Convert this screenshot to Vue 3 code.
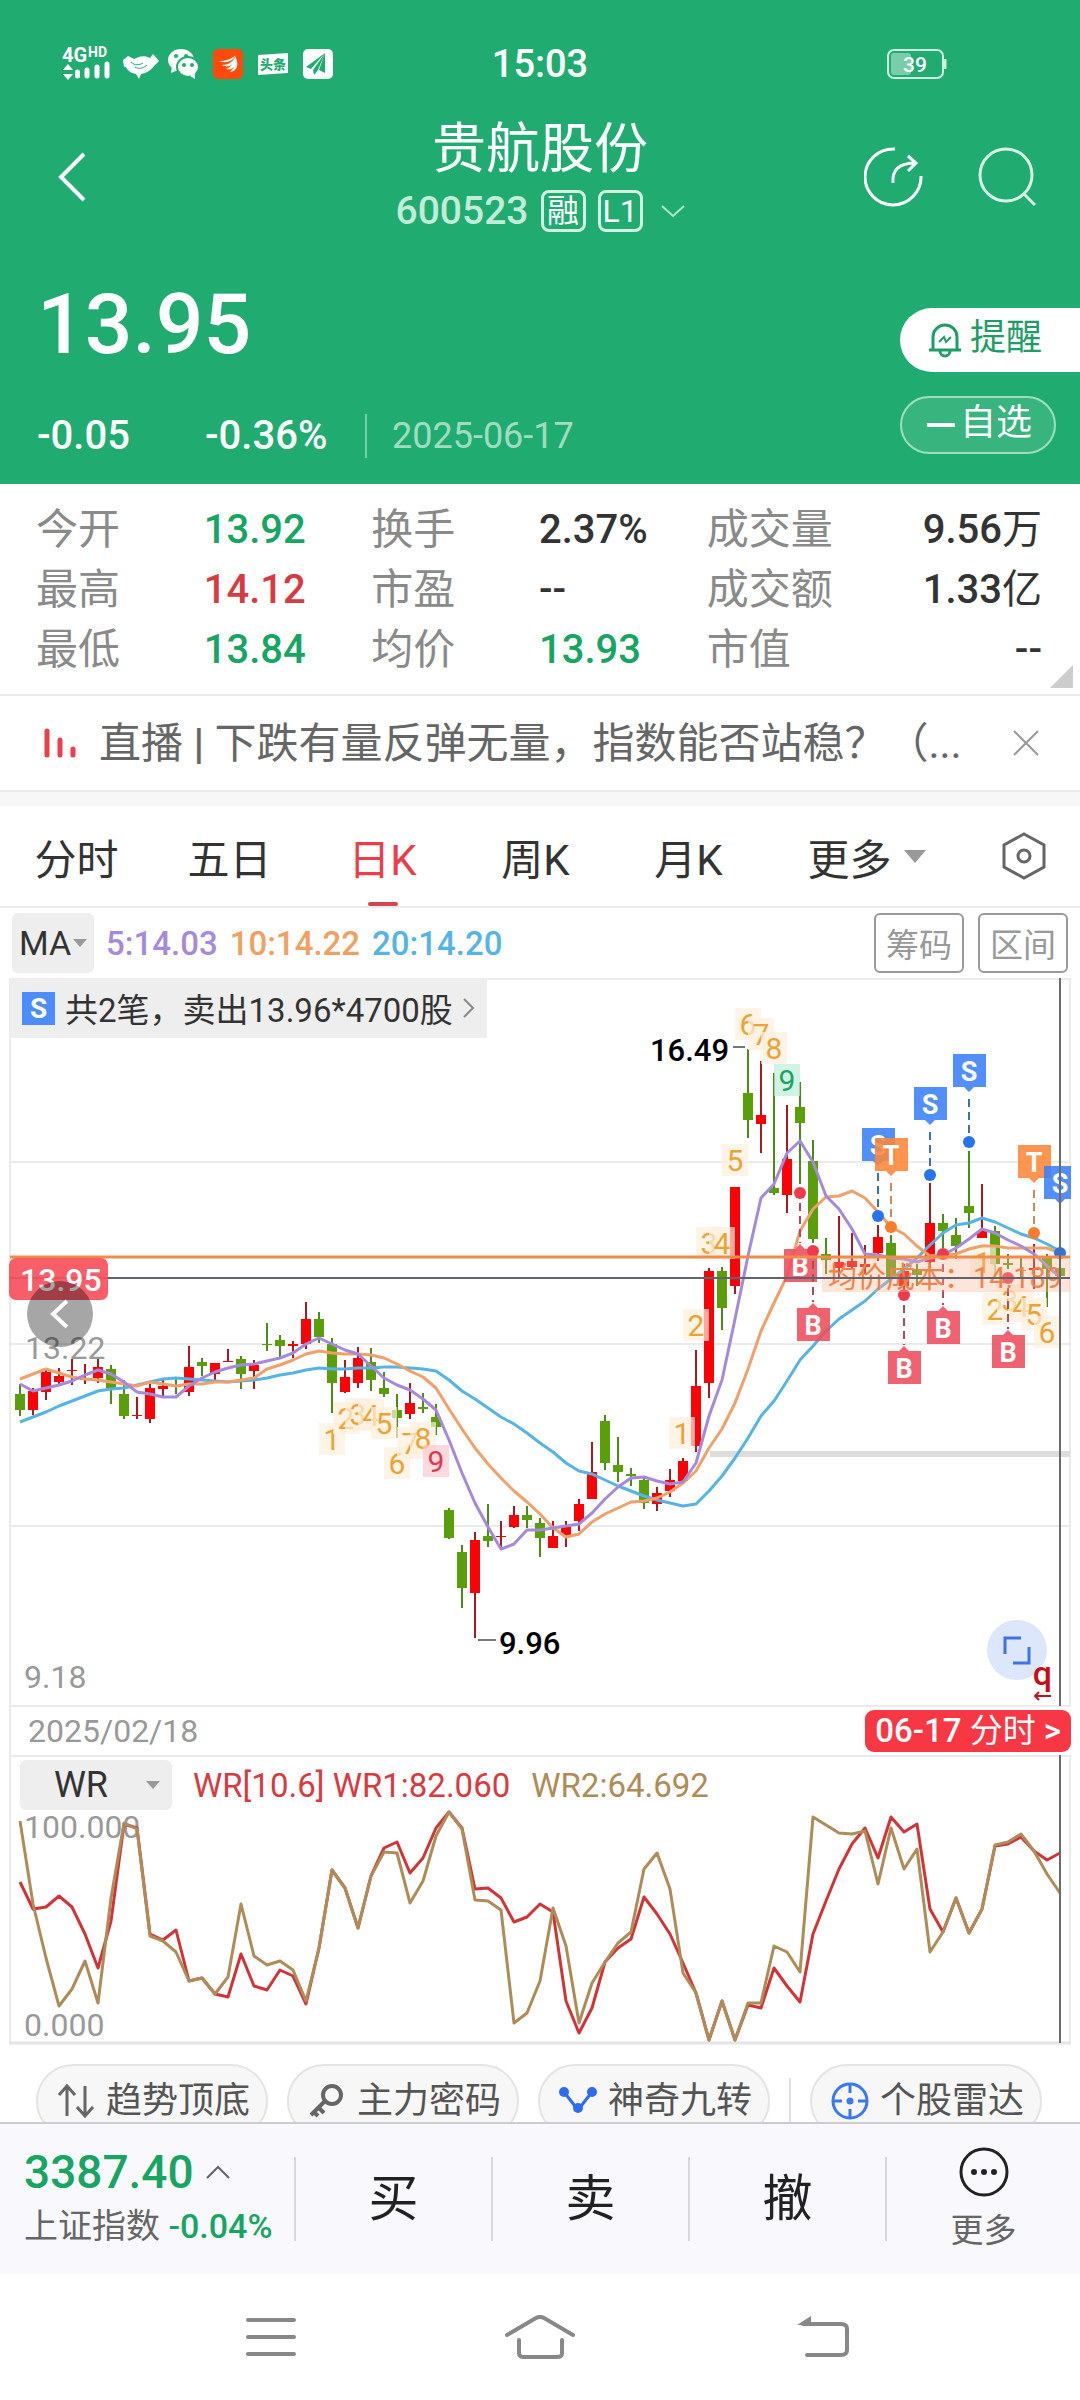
<!--
  App.vue
  个股行情页：报价头部、日K图、WR指标、底部交易栏
-->
<template>
  <div class="page">
    <header class="header">
      <div class="status">
        <div class="status-left">
          <svg class="status-icons" viewBox="55 35 290 55" aria-hidden="true">
            <text class="net" x="62" y="60">4G</text>
            <text class="net-hd" x="88" y="55">HD</text>
            <path d="M63 68l5-6 5 6zM63 72l5 6 5-6z" fill="#fff" />
            <path d="M77.500 70v4M87 68v6M97 65v9M107 62v12" stroke="#fff" stroke-width="5" stroke-linecap="round" />
            <path d="M123 58l5-4 6 3c5-3 11-4 16-1l3-4 6 7-5 5c-3 4-7 7-13 8l-2 5-3-5c-5-1-8-3-10-7h-2z" fill="#fff" />
            <path d="M131 60c4 4 8 3 12 1M135 65c3 2 8 2 12-2" fill="none" stroke="#20ac70" stroke-width="1" />
            <ellipse cx="181" cy="58" rx="13" ry="11" fill="#fff" />
            <path d="M172 64l-1 7 7-3z" fill="#fff" />
            <ellipse cx="188" cy="65" rx="11" ry="10" fill="#fff" stroke="#20ac70" stroke-width="2" />
            <path d="M190 74l5 3v-6z" fill="#fff" />
            <circle cx="176" cy="54" r="2" fill="#20ac70" />
            <circle cx="186" cy="54" r="2" fill="#20ac70" />
            <circle cx="184" cy="63" r="2" fill="#20ac70" />
            <circle cx="192" cy="63" r="2" fill="#20ac70" />
            <rect x="213" y="47" width="30" height="30" rx="5" fill="#ff4a0a" />
            <path d="M219 59c7 0 12-2 17-6-3 6-9 9-17 6zM222 63c6 0 11-3 14-9-1 8-7 13-14 9zM226 67c5-2 8-6 10-12 1 8-3 14-10 12zM230 70c4-4 6-8 6-14 3 7 1 13-6 14z" fill="#fff" />
            <path d="M258 53l30-2v20l-30 2z" fill="#fff" />
            <text class="toutiao" x="260" y="67">头条</text>
            <rect x="303" y="47" width="30" height="30" rx="5" fill="#fff" />
            <path d="M325 51l-19 14 5 2zM325 51l-12 17 1 5 4-5zM325 51l-6 17 6 3z" fill="#20ac70" />
          </svg>
        </div>
        <span class="clock">15:03</span>
        <div class="status-right">
          <svg class="battery" viewBox="0 0 60 30">
            <rect x="1" y="1" width="55" height="28" rx="6" fill="none" stroke="#d3f1e2" stroke-width="2" />
            <rect x="4" y="4" width="20" height="22" rx="3" fill="#79cea9" />
            <path d="M58 10v10" stroke="#d3f1e2" stroke-width="3" />
            <text x="28" y="23" text-anchor="middle">39</text>
          </svg>
        </div>
      </div>

      <div class="titlebar">
        <button class="icon-btn back" aria-label="返回">
          <svg width="28" height="50" viewBox="0 0 28 50"><path d="M26 2L3 25l23 23" fill="none" stroke="#fff" stroke-width="4" /></svg>
        </button>
        <div class="title-box">
          <h1 class="title">贵航股份</h1>
          <div class="subtitle">
            <span class="code">600523</span>
            <span class="tag">融</span>
            <span class="tag">L1</span>
            <svg class="down" width="24" height="14" viewBox="0 0 24 14"><path d="M1 2l11 10L23 2" fill="none" stroke="#b5e3cd" stroke-width="2" /></svg>
          </div>
        </div>
        <div class="title-actions">
          <button class="icon-btn" aria-label="分享">
            <svg width="60" height="60" viewBox="0 0 60 60" fill="none" stroke="#fff" stroke-width="3">
              <path d="M31 2a28 28 0 1 0 26 27" />
              <path d="M29 36c-1-13 6-20 22-20M44 9l8 7-8 8" />
            </svg>
          </button>
          <button class="icon-btn" aria-label="搜索">
            <svg width="60" height="60" viewBox="0 0 60 60" fill="none" stroke="#d8f3e6" stroke-width="3">
              <circle cx="30" cy="28" r="26" />
              <path d="M48 47l11 11" />
            </svg>
          </button>
        </div>
      </div>

      <div class="quote">
        <div>
          <div class="price">13.95</div>
          <div class="change">
            <span class="diff">-0.05</span>
            <span class="rate">-0.36%</span>
            <span class="date">2025-06-17</span>
          </div>
        </div>
        <div class="quote-actions">
          <button class="remind">
            <svg width="34" height="36" viewBox="0 0 34 36" fill="none" stroke="#1f9d67" stroke-width="3">
              <path d="M5 28V15a12 12 0 0 1 24 0v13M1 28h32M12 29a5 5 0 0 0 10 0" />
              <path d="M11 20l5-5 2 5 5-5" stroke-width="2" />
            </svg>
            <span>提醒</span>
          </button>
          <button class="favor"><i class="minus"></i><span>自选</span></button>
        </div>
      </div>
    </header>

    <dl class="stats">
      <div v-for="s in stats" :key="s.label" class="stat">
        <dt>{{ s.label }}</dt>
        <dd :class="s.color">{{ s.value }}<span v-if="s.unit" class="unit">{{ s.unit }}</span></dd>
      </div>
      <i class="corner"></i>
    </dl>

    <div class="news">
      <svg width="34" height="30" viewBox="0 0 34 30"><path d="M4 3v24M17 12v15M30 21v6" stroke="#ec3f4d" stroke-width="5" stroke-linecap="round" /></svg>
      <a href="#" class="news-text">直播 <b>|</b> 下跌有量反弹无量，指数能否站稳？（...</a>
      <button class="icon-btn" aria-label="关闭">
        <svg width="26" height="26" viewBox="0 0 26 26"><path d="M1 1l24 24M25 1L1 25" stroke="#999" stroke-width="2" /></svg>
      </button>
    </div>

    <nav class="tabs">
      <button v-for="t in tabs" :key="t" class="tab" :class="{ active: t === current }" @click="current = t">{{ t }}</button>
      <button class="tab tab-more">更多<i class="tri"></i></button>
      <button class="tab tab-set" aria-label="设置">
        <svg width="44" height="48" viewBox="0 0 44 48" fill="none" stroke="#666" stroke-width="3">
          <path d="M22 2l20 11v22L22 46 2 35V13z" />
          <circle cx="22" cy="24" r="6" />
        </svg>
      </button>
    </nav>

    <div class="ma-bar">
      <button class="ma-btn">MA<i class="tri small"></i></button>
      <span class="purple">5:14.03</span>
      <span class="orange">10:14.22</span>
      <span class="blue">20:14.20</span>
      <div class="ma-actions">
        <button class="outline-btn">筹码</button>
        <button class="outline-btn">区间</button>
      </div>
    </div>

    <section class="chart">
      <svg class="chart-svg" viewBox="0 0 1080 729">
        <path d="M10 1H1070M10 184H1070M10 366H1070M10 548H1070M10 728H1070M10 0V729M1070 0V729" class="grid" />
        <rect x="710" y="473" width="360" height="6" fill="#ddd" />

        <!-- K线 -->
        <g v-for="(k, i) in candles" :key="i">
          <rect :x="px(i) - 1" :y="k[0]" width="2" :height="k[3] - k[0]" :fill="k[4] ? '#a81a22' : '#4d8a17'" />
          <rect :x="px(i) - 5" :y="k[1]" width="10" :height="k[2] - k[1]" :fill="k[4] ? '#fb0207' : '#5a9f0b'" />
        </g>

        <!-- 九转数字 -->
        <g v-for="(n, i) in nines" :key="'n' + i" :class="['nine', n[3]]">
          <rect :x="n[1] - 13" :y="n[2] - 16" width="26" height="32" />
          <text :x="n[1]" :y="n[2] + 11" text-anchor="middle">{{ n[0] }}</text>
        </g>

        <!-- 均线 -->
        <polyline :points="line(ma20)" class="ma" stroke="#56b4e4" />
        <polyline :points="line(ma10)" class="ma" stroke="#f0a06a" />
        <polyline :points="line(ma5)" class="ma" stroke="#a58adb" />

        <!-- 买卖点 -->
        <g v-for="(m, i) in marks" :key="'m' + i" :class="['mark', 'mark-' + m.t]">
          <path :d="stem(m)" class="stem" />
          <circle :cx="m.x" :cy="m.dot" r="6" />
          <path :d="flag(m)" class="flag" />
          <text :x="m.x" :y="m.y + 27" text-anchor="middle">{{ m.t }}</text>
        </g>

        <rect x="822" y="280" width="248" height="34" fill="#fbb593" opacity="0.35" />
        <text x="828" y="310" class="cost">均价成本：14.189</text>
        <path d="M10 279H1070" stroke="#f28b48" stroke-width="3" />
        <path d="M10 300H1070" stroke="#5f6470" stroke-width="2" />
        <path d="M1060 0V728" stroke="#6b6b6b" stroke-width="2" />

        <path d="M733 69H745M478 662H496" stroke="#777" stroke-width="2" />
        <text x="729" y="83" text-anchor="end" class="extreme">16.49</text>
        <text x="499" y="676" class="extreme">9.96</text>
        <text x="25" y="381" class="axis">13.22</text>
        <text x="24" y="710" class="axis">9.18</text>
        <rect x="9" y="280" width="99" height="42" rx="7" fill="#f7505c" opacity="0.92" />
        <text x="20" y="313" class="last">13.95</text>
      </svg>
      <button class="trade">
        <b class="trade-tag">S</b>共2笔，卖出13.96*4700股
        <svg width="12" height="20" viewBox="0 0 12 20"><path d="M1 1l9 9-9 9" fill="none" stroke="#888" stroke-width="2" /></svg>
      </button>
      <button class="round collapse" aria-label="收起">
        <svg width="66" height="66" viewBox="0 0 66 66"><path d="M40 20L26 33l14 13" fill="none" stroke="#fff" stroke-width="4" /></svg>
      </button>
      <button class="round expand" aria-label="全屏">
        <svg width="60" height="60" viewBox="0 0 60 60"><path d="M18 34V18h16M26 43h16V27" fill="none" stroke="#3e74e0" stroke-width="3" /></svg>
      </button>
      <span class="q">q<svg width="18" height="10" viewBox="0 0 18 10"><path d="M18 5H2M6 1L2 5l4 4" fill="none" stroke="#c5101c" stroke-width="2" /></svg></span>
    </section>

    <div class="date-row">
      <span>2025/02/18</span>
      <button class="day-btn">06-17 <span class="unit">分时</span> &gt;</button>
    </div>

    <section class="wr">
      <svg class="chart-svg" viewBox="0 0 1080 290">
        <path d="M10 1H1070M10 0V290M1070 0V290" class="grid" />
        <path d="M10 288H1070" stroke="#e4e4e4" stroke-width="3" />
        <text x="24" y="83" class="axis">100.000</text>
        <text x="24" y="281" class="axis">0.000</text>
        <polyline :points="line(wr1)" class="ma" stroke="#d03437" />
        <polyline :points="line(wr2)" class="ma" stroke="#ae8c58" />
        <path d="M1060 0V288" stroke="#6b6b6b" stroke-width="2" />
      </svg>
      <div class="wr-head">
        <button class="wr-btn">WR<i class="tri small"></i></button>
        <span class="red">WR[10.6] WR1:82.060</span>
        <span class="tan">WR2:64.692</span>
      </div>
    </section>

    <div class="tools">
      <button class="tool">
        <svg width="38" height="36" viewBox="0 0 38 36" fill="none" stroke="#666" stroke-width="3"><path d="M10 33V4M2 12l8-9 8 9M28 3v29M20 24l8 9 8-9" /></svg>
        趋势顶底
      </button>
      <button class="tool">
        <svg width="38" height="36" viewBox="0 0 38 36" fill="none" stroke="#666" stroke-width="4"><circle cx="24" cy="12" r="9" /><path d="M17 18L3 32M11 25l5 5M6 29l4 4" /></svg>
        主力密码
      </button>
      <button class="tool">
        <svg width="38" height="36" viewBox="0 0 38 36"><path d="M5 9l14 18L33 9" fill="none" stroke="#2f6bf0" stroke-width="3" /><g fill="#2f6bf0"><circle cx="5" cy="9" r="5" /><circle cx="33" cy="9" r="5" /><circle cx="19" cy="25" r="5" /></g></svg>
        神奇九转
      </button>
      <i class="tool-line"></i>
      <button class="tool">
        <svg width="38" height="38" viewBox="0 0 38 38" fill="none" stroke="#3a78f2" stroke-width="3"><circle cx="19" cy="19" r="17" /><path d="M19 2v9M19 27v9M2 19h9M27 19h9" /><circle cx="19" cy="19" r="2" fill="#3a78f2" /></svg>
        个股雷达
      </button>
    </div>

    <footer class="bottom">
      <div class="index">
        <div class="index-value">3387.40
          <svg width="24" height="16" viewBox="0 0 24 16"><path d="M1 14L12 3l11 11" fill="none" stroke="#666" stroke-width="2" /></svg>
        </div>
        <div class="index-name">上证指数 <span>-0.04%</span></div>
      </div>
      <button class="trade-btn">买</button>
      <button class="trade-btn">卖</button>
      <button class="trade-btn">撤</button>
      <button class="trade-btn more-btn">
        <svg width="50" height="50" viewBox="0 0 50 50"><circle cx="25" cy="25" r="23" fill="none" stroke="#222" stroke-width="3" /><g fill="#222"><circle cx="15" cy="25" r="3" /><circle cx="25" cy="25" r="3" /><circle cx="35" cy="25" r="3" /></g></svg>
        更多
      </button>
    </footer>

    <nav class="sys-nav">
      <button class="icon-btn" aria-label="任务">
        <svg width="50" height="42" viewBox="0 0 50 42"><path d="M2 4h46M2 21h46M2 38h46" stroke="#888" stroke-width="4" stroke-linecap="round" /></svg>
      </button>
      <button class="icon-btn" aria-label="主页">
        <svg width="70" height="44" viewBox="0 0 70 44" fill="none" stroke="#888" stroke-width="4" stroke-linecap="round"><path d="M2 20L31 3q4-2 8 0l29 17M14 25v13q0 4 5 4h33q5 0 5-4V25" /></svg>
      </button>
      <button class="icon-btn" aria-label="后退">
        <svg width="52" height="42" viewBox="0 0 52 42"><path d="M6 8h38q6 0 6 5v21q0 5-6 5H10" fill="none" stroke="#888" stroke-width="4" stroke-linecap="round" /><path d="M0 9L14 0v9z" fill="#888" /></svg>
      </button>
    </nav>
  </div>
</template>

<script setup>
import { ref } from 'vue';

const tabs = ['分时', '五日', '日K', '周K', '月K'];
const current = ref('日K');

const stats = [
  { label: '今开', value: '13.92', color: 'green' },
  { label: '换手', value: '2.37%' },
  { label: '成交量', value: '9.56', unit: '万' },
  { label: '最高', value: '14.12', color: 'red' },
  { label: '市盈', value: '--' },
  { label: '成交额', value: '1.33', unit: '亿' },
  { label: '最低', value: '13.84', color: 'green' },
  { label: '均价', value: '13.93', color: 'green' },
  { label: '市值', value: '--' }
];

// [最高, 实体上沿, 实体下沿, 最低, 是否上涨]
const candles = [
  [406, 416, 432, 438, 0], [410, 413, 432, 437, 1], [390, 394, 414, 422, 1], [390, 398, 404, 406, 1],
  [381, 392, 393, 407, 1], [386, 401, 402, 406, 1], [381, 389, 400, 405, 1], [387, 391, 410, 426, 0],
  [402, 416, 438, 441, 0], [419, 437, 438, 441, 1], [406, 410, 441, 445, 1], [402, 408, 411, 420, 1],
  [400, 408, 409, 416, 0], [368, 389, 414, 418, 1], [380, 384, 388, 398, 0], [385, 385, 396, 403, 1],
  [371, 383, 384, 384, 1], [378, 381, 396, 411, 0], [382, 387, 393, 411, 1], [345, 366, 367, 373, 0],
  [357, 362, 368, 379, 0], [363, 366, 368, 380, 1], [324, 341, 366, 371, 1], [334, 341, 359, 365, 0],
  [360, 366, 405, 435, 0], [382, 399, 414, 415, 1], [369, 380, 405, 410, 1], [370, 384, 402, 413, 0],
  [394, 410, 416, 419, 0], [416, 432, 440, 460, 0], [405, 425, 436, 441, 1], [415, 429, 431, 435, 0],
  [426, 439, 449, 457, 0], [530, 532, 560, 561, 0], [567, 574, 610, 630, 0], [554, 562, 615, 660, 1],
  [526, 558, 563, 569, 0], [543, 558, 559, 570, 1], [528, 537, 549, 550, 1], [528, 537, 542, 550, 0],
  [540, 545, 560, 579, 0], [543, 558, 570, 570, 1], [543, 549, 557, 569, 1], [521, 526, 543, 553, 1],
  [464, 494, 521, 521, 1], [437, 443, 485, 492, 0], [459, 487, 494, 504, 0], [490, 496, 498, 508, 0],
  [500, 502, 525, 531, 0], [509, 515, 526, 533, 1], [491, 502, 513, 519, 1], [480, 483, 503, 505, 1],
  [372, 408, 468, 474, 1], [290, 293, 405, 420, 1], [289, 293, 330, 352, 0], [209, 209, 308, 316, 1],
  [71, 115, 142, 160, 0], [83, 137, 146, 175, 1], [95, 210, 215, 217, 0], [127, 181, 217, 235, 1],
  [104, 129, 145, 206, 0], [162, 183, 261, 265, 0], [260, 276, 282, 296, 0], [238, 284, 290, 301, 1],
  [255, 283, 289, 292, 1], [267, 286, 289, 296, 1], [247, 259, 275, 283, 1], [257, 265, 300, 300, 0],
  [286, 293, 308, 312, 1], [286, 291, 297, 308, 0], [205, 245, 284, 290, 1], [236, 245, 253, 270, 0],
  [240, 257, 268, 281, 0], [173, 228, 235, 250, 0], [206, 253, 260, 260, 1], [248, 253, 286, 300, 0],
  [276, 285, 287, 291, 0], [280, 292, 293, 301, 0], [266, 290, 292, 311, 1], [276, 280, 291, 329, 0],
  [285, 290, 298, 320, 0]
];

const ma5 = [
  406, 413, 410, 407, 403, 397, 392, 396, 404, 414, 416, 419, 419, 408, 400, 394, 390, 387, 386, 383,
  380, 375, 366, 360, 366, 372, 376, 388, 400, 407, 412, 421, 432, 462, 495, 525, 549, 571, 566, 552,
  552, 550, 548, 546, 535, 521, 509, 500, 499, 503, 506, 504, 485, 438, 402, 341, 278, 220, 206, 175,
  163, 184, 218, 231, 251, 276, 277, 280, 281, 284, 280, 277, 270, 261, 251, 255, 262, 268, 276, 288, 299
];
const ma10 = [
  401, 396, 391, 395, 399, 401, 402, 404, 406, 408, 404, 406, 408, 406, 406, 404, 404, 402, 400, 391,
  387, 382, 376, 373, 375, 376, 376, 377, 380, 386, 393, 399, 410, 431, 451, 470, 486, 500, 513, 524,
  536, 550, 559, 556, 544, 536, 530, 524, 523, 520, 514, 505, 493, 470, 451, 425, 391, 353, 325, 298,
  253, 231, 219, 218, 213, 220, 234, 249, 256, 268, 278, 277, 276, 271, 268, 268, 270, 270, 270, 270, 275
];
const ma20 = [
  444, 439, 434, 428, 423, 418, 413, 411, 410, 407, 404, 401, 400, 401, 402, 403, 404, 403, 402, 400,
  397, 395, 392, 390, 391, 391, 390, 390, 389, 389, 390, 391, 393, 402, 413, 421, 430, 439, 446, 455,
  465, 474, 485, 493, 496, 502, 508, 513, 518, 522, 525, 528, 526, 513, 498, 480, 460, 438, 423, 403,
  382, 368, 353, 341, 332, 323, 311, 301, 291, 280, 267, 255, 247, 245, 240, 244, 250, 256, 260, 266, 273
];
const wr1 = [
  127, 154, 152, 141, 152, 179, 213, 166, 69, 73, 179, 185, 175, 226, 223, 239, 242, 199, 231, 235,
  215, 221, 249, 193, 115, 133, 173, 121, 93, 87, 118, 103, 73, 57, 73, 134, 133, 143, 167, 162,
  149, 157, 246, 278, 253, 207, 193, 184, 142, 159, 179, 208, 238, 285, 246, 285, 250, 253, 213, 231,
  247, 179, 146, 114, 89, 73, 103, 62, 77, 69, 154, 177, 143, 178, 154, 91, 89, 82, 96, 105, 98
];
const wr2 = [
  66, 149, 203, 251, 234, 206, 248, 143, 68, 74, 181, 186, 197, 226, 223, 239, 222, 149, 201, 210,
  206, 215, 246, 193, 115, 133, 173, 121, 97, 98, 148, 126, 81, 57, 74, 145, 146, 155, 268, 258,
  226, 153, 191, 268, 228, 207, 188, 177, 114, 98, 134, 218, 238, 285, 246, 285, 248, 248, 191, 197,
  217, 62, 70, 78, 79, 76, 129, 73, 114, 94, 197, 177, 143, 178, 154, 90, 87, 79, 96, 119, 138
];

// [数字, x, y, 样式]
const nines = [
  [1, 332, 461], [2, 346, 440], [3, 358, 436], [4, 371, 437], [5, 384, 445],
  [6, 397, 485], [7, 410, 465], [8, 423, 460], [9, 436, 483, 'nine-red'],
  [1, 682, 455], [2, 696, 347], [3, 709, 265], [4, 722, 265], [5, 735, 182],
  [6, 748, 46], [7, 761, 56], [8, 774, 70], [9, 787, 102, 'nine-green'],
  [1, 983, 284], [2, 995, 331], [3, 1010, 322], [4, 1021, 328], [5, 1034, 336], [6, 1047, 354]
];

const marks = [
  { t: 'S', x: 878, y: 150, dot: 238 },
  { t: 'T', x: 891, y: 160, dot: 249 },
  { t: 'S', x: 930, y: 109, dot: 197 },
  { t: 'S', x: 969, y: 76, dot: 164 },
  { t: 'T', x: 1034, y: 167, dot: 255 },
  { t: 'S', x: 1060, y: 188, dot: 275 },
  { t: 'B', x: 800, y: 271, dot: 215 },
  { t: 'B', x: 813, y: 330, dot: 273 },
  { t: 'B', x: 904, y: 373, dot: 317 },
  { t: 'B', x: 943, y: 333, dot: 276 },
  { t: 'B', x: 1008, y: 357, dot: 300 }
];

function px(i) {
  return 20 + i * 13;
}
function line(values) {
  return values.map((v, i) => `${px(i)},${v}`).join(' ');
}
// 买入旗标尖角朝上，其余朝下
function flag({ t, x, y }) {
  const right = Math.min(x + 17, 1071);
  return t === 'B'
    ? `M${x - 16} ${y}H${x - 5}L${x} ${y - 5}L${x + 5} ${y}H${right}V${y + 33}H${x - 16}z`
    : `M${x - 16} ${y}H${right}V${y + 33}H${x + 5}L${x} ${y + 38}L${x - 5} ${y + 33}H${x - 16}z`;
}
function stem({ t, x, y, dot }) {
  return t === 'B' ? `M${x} ${dot + 10}V${y - 6}` : `M${x} ${y + 45}V${dot - 6}`;
}
</script>

<style>
body {
  margin: 0;
  background: #fff;
}
</style>

<style scoped>
.page {
  font-family: Roboto, "Noto Sans CJK SC", sans-serif;
  color: #333;
  background: #fff;
}
button {
  margin: 0;
  padding: 0;
  border: 0;
  background: none;
  font: inherit;
  color: inherit;
  cursor: pointer;
}
svg {
  display: block;
  flex: none;
}
.green { color: #16a562; }
.red { color: #d73a40; }
.purple { color: #a58adb; }
.orange { color: #f0a060; }
.blue { color: #56b4e4; }
.tan { color: #ae8c58; }
.unit { font-weight: 400; }

/* 头部 */
.header {
  background: #20ac70;
  color: #fff;
}
.status {
  display: grid;
  grid-template-columns: 1fr auto 1fr;
  align-items: center;
  height: 112px;
  padding: 8px 55px 0;
}
.status-icons {
  width: 290px;
  height: 55px;
}
.net {
  font-size: 20px;
  font-weight: 700;
  fill: #fff;
}
.net-hd {
  font-size: 14px;
  font-weight: 700;
  fill: #fff;
}
.toutiao {
  font-size: 13px;
  font-weight: 900;
  fill: #20ac70;
}
.clock {
  font-size: 38px;
  font-weight: 500;
}
.status-right {
  display: flex;
  justify-content: flex-end;
  padding-right: 78px;
}
.battery {
  width: 60px;
  height: 30px;
}
.battery text {
  font-size: 21px;
  font-weight: 500;
  fill: #fff;
}
.titlebar {
  display: grid;
  grid-template-columns: 1fr auto 1fr;
  align-items: center;
  padding: 0 44px;
}
.icon-btn {
  display: flex;
  justify-self: start;
}
.back {
  margin-left: 14px;
}
.title-box {
  text-align: center;
}
.title {
  margin: 0;
  font-size: 54px;
  font-weight: 400;
  line-height: 60px;
}
.subtitle {
  display: flex;
  align-items: center;
  justify-content: center;
  gap: 12px;
  margin-top: 8px;
  line-height: 46px;
}
.code {
  font-size: 39px;
  font-weight: 500;
  color: #c2ebd8;
}
.tag {
  width: 39px;
  border: 3px solid #d3f1e2;
  border-radius: 8px;
  font-size: 32px;
  line-height: 36px;
}
.down {
  margin-left: 6px;
}
.title-actions {
  display: flex;
  justify-content: flex-end;
  gap: 52px;
}
.quote {
  display: flex;
  justify-content: space-between;
  padding: 50px 0 26px 37px;
}
.price {
  font-size: 84px;
  font-weight: 500;
  line-height: 82px;
}
.change {
  display: flex;
  align-items: center;
  margin-top: 48px;
  font-size: 40px;
  font-weight: 500;
  line-height: 44px;
}
.diff {
  width: 168px;
}
.rate {
  width: 160px;
  border-right: 2px solid #79cea9;
}
.date {
  padding-left: 25px;
  font-size: 36px;
  font-weight: 400;
  color: #a0dcc0;
}
.quote-actions {
  display: flex;
  flex-direction: column;
  gap: 24px;
  padding-top: 24px;
}
.remind {
  display: flex;
  align-items: center;
  gap: 8px;
  height: 64px;
  padding: 0 38px 0 28px;
  border-radius: 32px 0 0 32px;
  background: #fff;
  font-size: 36px;
  color: #1f9d67;
}
.remind span,
.favor span {
  line-height: 44px;
  padding-bottom: 4px;
}
.favor {
  display: flex;
  align-items: center;
  gap: 5px;
  height: 58px;
  margin-right: 24px;
  padding: 0 22px 0 25px;
  border: 2px solid #a0dcc0;
  border-radius: 29px;
  background: #38b57f;
  font-size: 36px;
}
.minus {
  width: 28px;
  height: 4px;
  background: #fff;
}

/* 行情数据 */
.stats {
  position: relative;
  display: grid;
  grid-template-columns: 1fr 1fr 1fr;
  margin: 0;
  padding: 16px 38px 14px 36px;
  border-bottom: 2px solid #ebebeb;
  font-size: 40px;
  line-height: 60px;
}
.stat {
  display: grid;
  grid-template-columns: 1fr 1fr;
}
.stat:nth-child(3n) {
  display: flex;
  justify-content: space-between;
}
.stat dt {
  font-size: 42px;
  color: #8a8a8a;
}
.stat dd {
  margin: 0;
  font-weight: 500;
}
.corner {
  position: absolute;
  right: 7px;
  bottom: 6px;
  border-left: 23px solid transparent;
  border-bottom: 23px solid #ccc;
}

/* 直播条 */
.news {
  display: flex;
  align-items: center;
  height: 94px;
  padding: 0 41px 0 43px;
  border-bottom: 2px solid #ebebeb;
}
.news-text {
  flex: 1;
  margin: 0 22px;
  padding-bottom: 8px;
  font-size: 42px;
  color: #666;
  text-decoration: none;
  white-space: nowrap;
}

/* 周期 */
.tabs {
  display: grid;
  grid-template-columns: repeat(5, 153fr) 203fr 112fr;
  height: 100px;
  border-top: 14px solid #f7f7f7;
  border-bottom: 2px solid #ebebeb;
}
.tab {
  position: relative;
  display: flex;
  align-items: center;
  justify-content: center;
  font-size: 42px;
}
.tab.active {
  color: #e93f4c;
}
.tab.active::after {
  content: '';
  position: absolute;
  bottom: 0;
  width: 30px;
  height: 4px;
  border-radius: 2px;
  background: #d0484f;
}
.tri {
  margin-left: 12px;
  border: 11px solid transparent;
  border-top: 13px solid #999;
  border-bottom: 0;
}
.tri.small {
  margin-left: 2px;
  border-width: 8px 7px 0;
}

/* 均线 */
.ma-bar {
  display: flex;
  align-items: center;
  gap: 12px;
  padding: 5px 12px;
  font-size: 33px;
  font-weight: 500;
}
.ma-btn {
  display: flex;
  align-items: center;
  justify-content: center;
  width: 82px;
  height: 60px;
  border-radius: 6px;
  background: #eee;
  font-size: 34px;
  font-weight: 400;
}
.ma-actions {
  display: flex;
  gap: 14px;
  margin-left: auto;
}
.outline-btn {
  height: 60px;
  padding: 0 10px;
  border: 2px solid #999;
  border-radius: 6px;
  font-size: 33px;
  font-weight: 400;
  color: #999;
}

/* K线图 */
.chart {
  position: relative;
}
.chart-svg {
  width: 100%;
  height: auto;
}
.grid {
  fill: none;
  stroke: #ebebeb;
  stroke-width: 2;
}
.ma {
  fill: none;
  stroke-width: 3;
  stroke-linejoin: round;
}
.axis {
  font-size: 32px;
  fill: #999;
}
.extreme {
  font-size: 31px;
  font-weight: 500;
  fill: #000;
}
.last {
  font-size: 32px;
  font-weight: 500;
  fill: #fff;
}
.cost {
  font-size: 29px;
  fill: #f0834a;
}
.nine rect {
  fill: #fff0dc;
  opacity: 0.7;
}
.nine text {
  font-size: 30px;
  fill: #eba336;
}
.nine-red rect {
  fill: #fbc9d0;
}
.nine-red text {
  fill: #dc3a50;
}
.nine-green rect {
  fill: #bdecd8;
}
.nine-green text {
  fill: #16a562;
}
.stem {
  fill: none;
  stroke-width: 2;
  stroke-dasharray: 8 5;
}
.flag {
  opacity: 0.88;
}
.mark text {
  font-size: 27px;
  font-weight: 700;
  fill: #fff;
}
.mark-S { fill: #2674ee; }
.mark-S .flag { fill: #3a80fa; }
.mark-S .stem { stroke: #3d71a8; }
.mark-T { fill: #fb7c2a; }
.mark-T .flag { fill: #fd8638; }
.mark-T .stem { stroke: #d08a5a; }
.mark-B { fill: #f03a4c; }
.mark-B .flag { fill: #ef4c5c; }
.mark-B .stem { stroke: #b5475a; }
.trade {
  position: absolute;
  top: 0;
  left: 10px;
  display: flex;
  align-items: center;
  height: 60px;
  padding: 0 12px;
  background: #eee;
  font-size: 33px;
}
.trade-tag {
  width: 33px;
  margin-right: 10px;
  background: #4c8dfa;
  font-size: 28px;
  line-height: 33px;
  color: #fff;
}
.trade svg {
  margin-left: 10px;
}
.round {
  position: absolute;
  border-radius: 50%;
}
.collapse {
  top: 303px;
  left: 27px;
  background: rgba(0, 0, 0, 0.35);
}
.expand {
  right: 33px;
  bottom: 27px;
  background: #dde7fb;
}
.q {
  position: absolute;
  right: 28px;
  bottom: 6px;
  font-size: 34px;
  font-weight: 500;
  line-height: 36px;
  color: #c5101c;
}

/* 日期 */
.date-row {
  display: flex;
  align-items: center;
  justify-content: space-between;
  height: 48px;
  margin: 0 9px;
  padding-left: 17px;
  border-left: 2px solid #ebebeb;
  font-size: 32px;
  color: #999;
}
.day-btn {
  height: 42px;
  padding: 0 10px;
  border-radius: 9px;
  background: #f73743;
  font-size: 33px;
  font-weight: 500;
  line-height: 42px;
  color: #fff;
}

/* WR指标 */
.wr {
  position: relative;
}
.wr-head {
  position: absolute;
  top: 5px;
  left: 20px;
  display: flex;
  align-items: center;
  gap: 21px;
  font-size: 33px;
}
.wr-btn {
  display: flex;
  align-items: center;
  justify-content: flex-end;
  gap: 36px;
  width: 152px;
  height: 50px;
  padding-right: 12px;
  border-radius: 6px;
  background: #eee;
  font-size: 36px;
}

/* 工具 */
.tools {
  display: flex;
  align-items: flex-start;
  justify-content: space-between;
  height: 58px;
  padding: 19px 38px 0 36px;
  overflow: hidden;
}
.tool {
  display: flex;
  align-items: center;
  gap: 11px;
  height: 74px;
  padding: 0 16px 0 19px;
  border: 2px solid #e4e4e4;
  border-radius: 37px;
  background: #f7f7f7;
  font-size: 36px;
  line-height: 70px;
  color: #555;
}
.tool-line {
  width: 2px;
  height: 60px;
  margin-top: 14px;
  background: #e0e0e0;
}

/* 底部 */
.bottom {
  display: grid;
  grid-template-columns: 294fr 197fr 197fr 197fr 195fr;
  align-items: center;
  height: 150px;
  border-top: 2px solid #ccc;
  background: #f9f9fd;
}
.index {
  padding-left: 24px;
  white-space: nowrap;
}
.index-value {
  display: flex;
  align-items: center;
  gap: 12px;
  font-size: 46px;
  font-weight: 500;
  line-height: 54px;
  color: #16a562;
}
.index-name {
  font-size: 34px;
  line-height: 54px;
  color: #666;
}
.index-name span {
  font-size: 34px;
  font-weight: 500;
  color: #16a562;
}
.trade-btn {
  height: 84px;
  border-left: 2px solid #d8d8dc;
  font-size: 50px;
  line-height: 84px;
  color: #222;
}
.more-btn {
  display: flex;
  flex-direction: column;
  align-items: center;
  justify-content: center;
  gap: 14px;
  font-size: 33px;
  line-height: 40px;
  color: #666;
}
.sys-nav {
  display: grid;
  grid-template-columns: 247fr 247fr 92fr 247fr 247fr;
  align-items: center;
  height: 125px;
}
.sys-nav .icon-btn {
  justify-self: center;
}
.sys-nav .icon-btn:nth-child(1) {
  grid-column: 1 / 3;
  padding-left: 48px;
}
.sys-nav .icon-btn:nth-child(3) {
  grid-column: 4 / 6;
  padding-right: 20px;
}
</style>
